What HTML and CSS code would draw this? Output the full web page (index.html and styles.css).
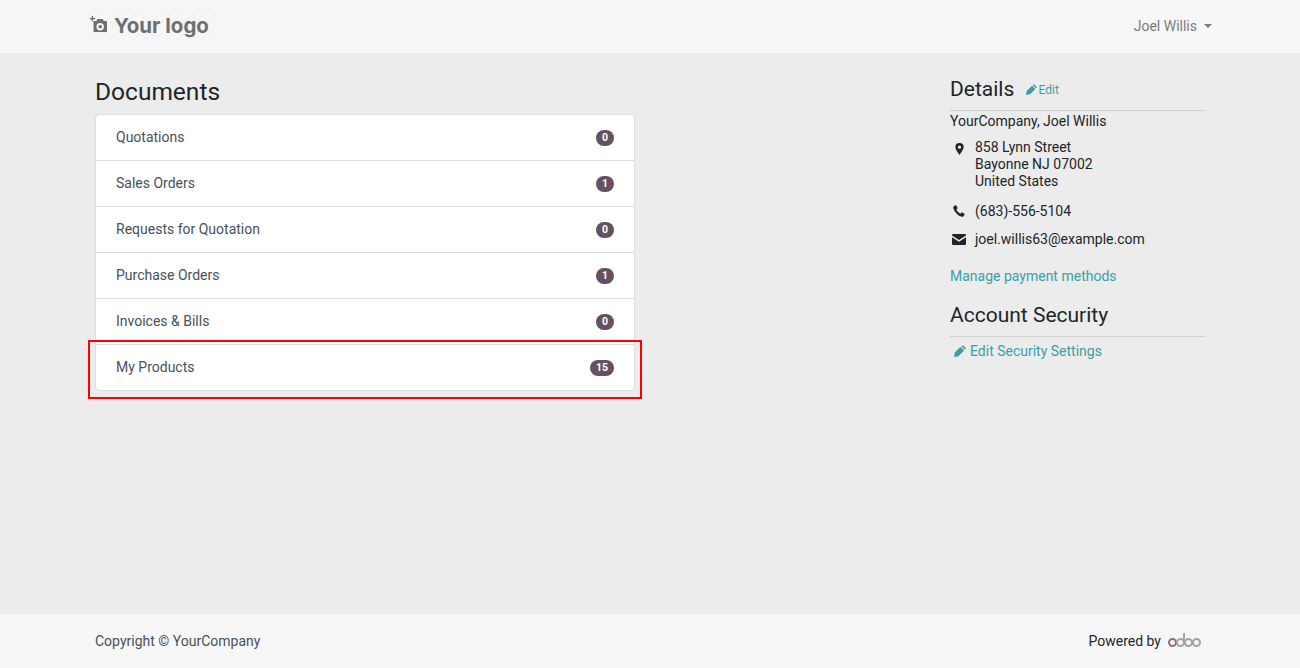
FILE: index.html
```html
<!DOCTYPE html>
<html lang="en">
<head>
<meta charset="utf-8">
<title>Documents</title>
<link rel="stylesheet" href="styles.css">
</head>
<body>
<div class="page">
  <header class="topbar">
    <div class="container topbar-inner">
      <a class="logo">
        <svg class="logo-icon" viewBox="0 0 18 17" width="18" height="17">
          <path fill="#6f6f6f" d="M1.700 0h1.300v2h2v1.300h-2v2H1.700v-2h-1.700V2h1.700z"/>
          <path fill="#6f6f6f" fill-rule="evenodd" d="M3.500 5h2.800l1.200-2h5.200L13.900 5H16a1 1 0 0 1 1 1v9a1 1 0 0 1-1 1H4.500a1 1 0 0 1-1-1zM10.200 7a3.700 3.700 0 1 0 0 7.400 3.700 3.700 0 0 0 0-7.400zM10.200 8.900a1.800 1.800 0 1 1 0 3.600 1.800 1.800 0 0 1 0-3.600z"/>
        </svg>
        <span class="logo-text">Your logo</span>
      </a>
      <a class="user">Joel Willis<span class="caret"></span></a>
    </div>
  </header>
  <main class="container content">
    <section class="docs">
      <h3 class="docs-title">Documents</h3>
      <ul class="list">
        <li class="row"><span>Quotations</span><span class="badge">0</span></li>
        <li class="row"><span>Sales Orders</span><span class="badge">1</span></li>
        <li class="row"><span>Requests for Quotation</span><span class="badge">0</span></li>
        <li class="row"><span>Purchase Orders</span><span class="badge">1</span></li>
        <li class="row"><span>Invoices &amp; Bills</span><span class="badge">0</span></li>
        <li class="row row-marked"><span>My Products</span><span class="badge">15</span><span class="highlight"></span></li>
      </ul>
    </section>
    <aside class="side">
      <h4 class="side-title">Details <a class="edit-small"><svg class="pencil" viewBox="0 0 12 12" width="11" height="11"><path fill="currentColor" d="M0 12l0.800-4.400 5.800-5.800 3.600 3.600-5.800 5.800zM7.300 1.100l.4-.4a1.200 1.200 0 0 1 1.700 0l1.900 1.900a1.200 1.200 0 0 1 0 1.700l-.4.400z"/></svg>Edit</a></h4>
      <div class="company">YourCompany, Joel Willis</div>
      <div class="contact contact-address">
        <span class="contact-icon"><svg viewBox="0 0 10 14" width="9" height="12"><path fill="#212529" fill-rule="evenodd" d="M5 0a4.800 4.800 0 0 1 4.800 4.800C9.800 7.500 6.500 12 5 14 3.500 12 .2 7.500.2 4.800A4.800 4.800 0 0 1 5 0zm0 3a1.900 1.900 0 1 0 0 3.800A1.900 1.900 0 0 0 5 3z"/></svg></span>
        <span>858 Lynn Street<br>Bayonne NJ 07002<br>United States</span>
      </div>
      <div class="contact contact-phone">
        <span class="contact-icon"><svg viewBox="0 0 12 12" width="12" height="12"><path fill="#212529" d="M2.700 0.300L0.700 1.300C0.100 1.700 0.200 2.800 0.600 4c1 2.900 4.400 6.600 7.400 7.600 1 .3 1.900.3 2.400-.2l1.200-1.800c.2-.3.100-.6-.2-.8L9.200 7.500c-.3-.2-.6-.1-.8.100l-1 1.100C6 8.200 3.900 6 3.300 4.600l1.100-1c.2-.2.300-.5.100-.8L3.400.5C3.200.2 3 .2 2.700.3z"/></svg></span>
        <span>(683)-556-5104</span>
      </div>
      <div class="contact contact-mail">
        <span class="contact-icon"><svg viewBox="0 0 14 11" width="14" height="11"><path fill="#212529" d="M1.300 0h11.400C13.400 0 14 .5 14 1.200v.4L7 6 0 1.600v-.4C0 .5.600 0 1.300 0zM0 3.300l7 4.400 7-4.400v6.400c0 .7-.6 1.300-1.300 1.300H1.300C.6 11 0 10.400 0 9.700z"/></svg></span>
        <span>joel.willis63@example.com</span>
      </div>
      <a class="link manage">Manage payment methods</a>
      <h4 class="side-title side-title-security">Account Security</h4>
      <a class="link security"><svg class="pencil" viewBox="0 0 12 12" width="12" height="12"><path fill="currentColor" d="M0 12l0.800-4.400 5.800-5.800 3.600 3.600-5.800 5.800zM7.300 1.100l.4-.4a1.200 1.200 0 0 1 1.700 0l1.900 1.900a1.200 1.200 0 0 1 0 1.700l-.4.400z"/></svg>Edit Security Settings</a>
    </aside>
  </main>
  <footer class="footer">
    <div class="container footer-inner">
      <span class="copyright">Copyright © YourCompany</span>
      <span class="powered">Powered by <span class="odoo"><span class="odoo-o"></span><span class="odoo-d"></span><span class="odoo-g"></span><span class="odoo-g"></span></span></span>
    </div>
  </footer>
</div>
</body>
</html>
```
FILE: styles.css
```css
* { box-sizing: border-box; }
html, body { margin: 0; height: 100%; }
body {
  font-family: Roboto, "Noto Sans", sans-serif;
  font-size: 14px;
  line-height: 21px;
  color: #212529;
  background: #ececec;
}
.page { height: 668px; display: flex; flex-direction: column; }
.container { width: 1140px; margin: 0 auto; padding: 0 15px; }
.topbar { height: 53px; background: #f7f7f7; flex: none; }
.topbar-inner { height: 100%; display: flex; align-items: center; justify-content: space-between; padding-right: 8px; padding-left: 0; }
.logo {
  display: flex; align-items: center; gap: 6px;
  height: 36px; width: 134px; margin-left: 7px; padding-left: 3px; margin-top: -1px;
  background: repeating-linear-gradient(135deg, #f7f7f7 0 6px, #f3f3f3 6px 8px);
}
.logo-icon { flex: none; margin-top: -3px; }
.logo-text { font-family: Inter, sans-serif; font-weight: 700; font-size: 20.5px; color: #6f6f6f; line-height: 26px; }
.user { color: #7c7c7c; display: flex; align-items: center; margin-top: -1px; }
.caret { width: 0; height: 0; margin-left: 7px; margin-top: -1px; border-top: 4px solid #7c7c7c; border-left: 4px solid transparent; border-right: 4px solid transparent; }
.content { flex: 1; display: flex; justify-content: space-between; align-items: flex-start; width: 1140px; }
.docs { width: 540px; }
.docs-title { margin: 0; padding-top: 24px; font-size: 24.5px; font-weight: 400; line-height: 29px; height: 61px; color: #212529; }
.list { list-style: none; margin: 0; padding: 0; width: 540px; background: #fff; border: 1px solid #dedede; border-radius: 4px; }
.row { position: relative; height: 46px; display: flex; align-items: center; justify-content: space-between; padding: 0 20px; color: #495057; border-bottom: 1px solid #dedede; }
.row:last-child { border-bottom: 0; height: 45px; }
.badge { background: #665160; color: #fff; font-size: 10.5px; font-weight: 700; line-height: 10px; min-width: 18px; padding: 3px 6px; border-radius: 10px; text-align: center; }
.highlight { position: absolute; left: -8px; right: -8px; top: -5px; bottom: -9px; border: 2px solid #f00; pointer-events: none; }
.side { width: 255px; padding-top: 24px; }
.side-title { margin: 0; font-size: 21px; font-weight: 400; line-height: 25px; height: 34px; border-bottom: 1px solid #cfcfcf; color: #212529; }
.edit-small { font-size: 12px; color: #3aa0a4; margin-left: 7px; vertical-align: 2px; }
.pencil { vertical-align: -1px; margin-right: 1px; }
.company { line-height: 21px; }
.contact { display: flex; }
.contact-icon { width: 25px; flex: none; display: flex; justify-content: center; padding-right: 7px; padding-top: 4px; height: 17px; }
.contact > span:last-child { line-height: 17px; }
.contact-address { margin-top: 7px; }
.contact-phone { margin-top: 13px; }
.contact-phone .contact-icon { padding-top: 2px; }
.contact-mail { margin-top: 11px; }
.contact-mail .contact-icon { padding-top: 3px; }
.link { color: #3aa0a4; display: block; }
.manage { margin-top: 18px; }
.side-title-security { margin-top: 16px; height: 34px; line-height: 24px; }
.security .pencil { margin: 0 4px 0 4px; }
.security { margin-top: 4px; }
.footer { height: 54px; background: #f7f7f7; flex: none; }
.footer-inner { height: 100%; display: flex; align-items: center; justify-content: space-between; }
.copyright { color: #495057; }
.powered { display: flex; align-items: center; color: #212529; padding-right: 5px; }
.odoo { display: flex; align-items: flex-end; margin-left: 7px; height: 12px; }
.odoo-o, .odoo-g, .odoo-d { display: block; width: 9px; height: 9px; border-radius: 50%; border: 2px solid #a3a3a3; margin-right: -1px; }
.odoo-o { border-color: #8f6b8b; }
.odoo-d { position: relative; }
.odoo-d::after { content: ""; position: absolute; right: -2px; bottom: 1px; width: 2px; height: 11px; background: #a3a3a3; }
```
